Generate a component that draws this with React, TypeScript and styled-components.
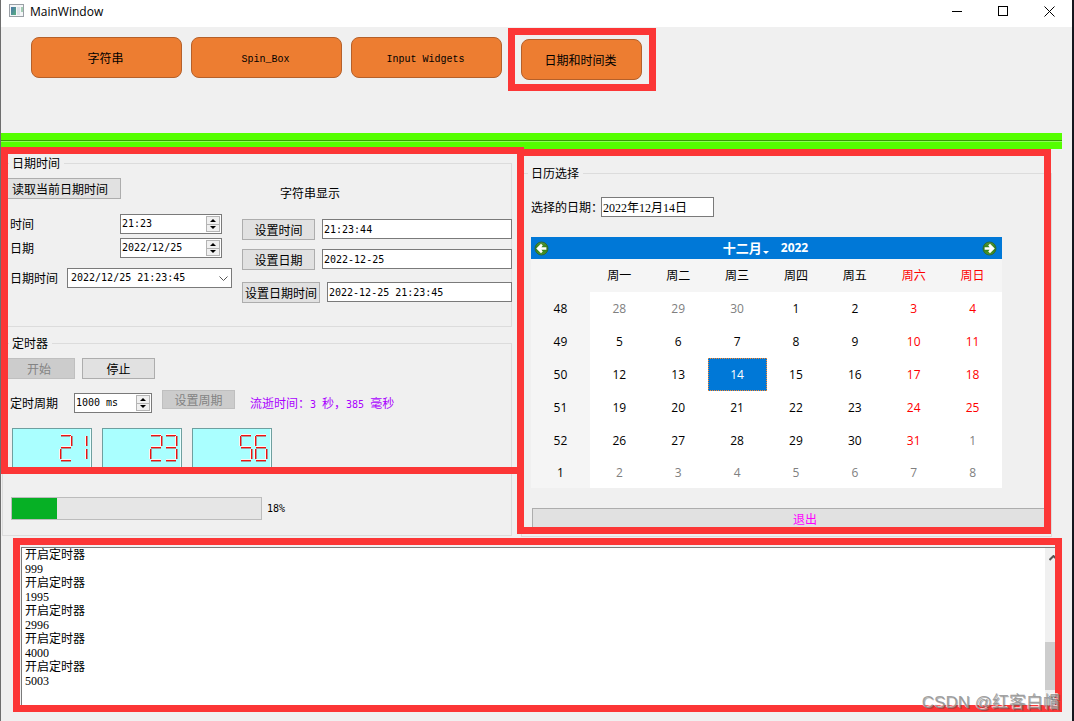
import React from "react";
import styled, { createGlobalStyle, css } from "styled-components";

const SONG = `"Liberation Serif", "Noto Sans CJK SC", serif`;
const MONO = `"DejaVu Sans Mono", "Noto Sans CJK SC", monospace`;
const TYPEWRITER = `"Liberation Mono", "Noto Sans CJK SC", monospace`;
const UI = `"Open Sans", "Noto Sans CJK SC", sans-serif`;
const MARK = "#fc3636";

const GlobalStyle = createGlobalStyle`
  * { box-sizing: border-box; }
  body {
    margin: 0;
    background: #f0f0f0;
    color: #000;
    font-family: ${SONG};
    font-size: 12px;
    line-height: 14px;
  }
  button, input, select, textarea {
    margin: 0;
    border-radius: 0;
    font: inherit;
    color: inherit;
  }
`;

const Window = styled.div`
  position: relative;
  min-height: 100vh;
  border-left: 1px solid #6e6e6e;
  border-right: 2px solid #16161e;
  background: #f0f0f0;
  overflow: hidden;
`;

/* ---------- title bar ---------- */

const TitleBar = styled.header`
  display: flex;
  align-items: flex-start;
  height: 27px;
  padding-left: 8px;
  background: #fff;
`;

const AppIcon = styled.svg`
  width: 16px;
  height: 16px;
  margin-top: 3px;
`;

const Title = styled.h1`
  flex: 1;
  margin: 0 0 0 5px;
  font: 400 12px/23px ${UI};
`;

const CaptionButton = styled.button`
  width: 46px;
  height: 23px;
  padding: 0;
  border: 0;
  background: none;
  svg { display: block; margin: 0 auto; }
`;

/* ---------- page switcher ---------- */

const PageNav = styled.nav`
  display: flex;
  align-items: flex-start;
  height: 106px;
  padding: 1px 0 0 30px;
`;

const PageButtons = styled.div`
  display: flex;
  gap: 9px;
  padding: 9px 6px 0 0;
`;

const PageButton = styled.button<{ $width?: number }>`
  width: ${(p) => p.$width ?? 151}px;
  height: 41px;
  padding: 2px 2px 0 0;
  border: 1px solid #b5602a;
  border-radius: 8px;
  background: #ed7d31;
`;

const MarkedPage = styled.div`
  padding: 4px 7px 4px 6px;
  border: 7px solid ${MARK};
`;

const Latin = styled.span`
  font-family: ${TYPEWRITER};
  font-size: 10px;
`;

const Digits = styled.span`
  font-family: ${MONO};
  font-size: 10px;
`;

const GreenRule = styled.div`
  display: flex;
  flex-direction: column;
  justify-content: center;
  height: 16px;
  margin-right: 10px;
  background: #55ff00;
  hr {
    width: 100%;
    height: 2px;
    margin: 0;
    border: 0;
    border-top: 1px solid #389c06;
    background: #8eff55;
  }
`;

/* ---------- panels ---------- */

const Panels = styled.main`
  display: grid;
  grid-template-columns: minmax(0, 510fr) minmax(0, 531fr);
  gap: 9px;
  padding: 0 20px 0 1px;
`;

const LeftPanel = styled.div`
  position: relative;
  display: flex;
  flex-direction: column;
  gap: 9px;
  padding-top: 7px;
  z-index: 1;
`;

const RightPanel = styled.div`
  position: relative;
  padding-top: 17px;
`;

const Marker = styled.div<{ $inset: string }>`
  position: absolute;
  inset: ${(p) => p.$inset};
  border: 7px solid ${MARK};
  pointer-events: none;
`;

const Group = styled.fieldset<{ $padding: string }>`
  min-width: 0;
  margin: 0;
  padding: ${(p) => p.$padding};
  border: 1px solid #dcdcdc;
`;

const Legend = styled.legend`
  height: 14px;
  margin-left: 6px;
  padding: 0 4px 0 3px;
  line-height: 16px;
`;

const PushButton = styled.button<{ $width: number; $height?: number }>`
  flex: none;
  width: ${(p) => p.$width}px;
  height: ${(p) => p.$height ?? 21}px;
  padding: 2px 0 0;
  border: 1px solid #adadad;
  background: #e1e1e1;
  white-space: nowrap;
  &:disabled {
    border-color: #bfbfbf;
    background: #cccccc;
    color: #838383;
  }
`;

const field = css`
  height: 20px;
  border: 1px solid #7a7a7a;
  background: #fff;
`;

const TextInput = styled.input<{ $width?: number; $song?: boolean }>`
  ${field}
  min-width: 0;
  padding: 0 1px;
  flex: ${(p) => (p.$width ? "none" : "1")};
  width: ${(p) => (p.$width ? `${p.$width}px` : "auto")};
  font-family: ${(p) => (p.$song ? SONG : MONO)};
  font-size: ${(p) => (p.$song ? 12 : 10)}px;
`;

const SpinFrame = styled.span<{ $width: number }>`
  ${field}
  display: flex;
  flex: none;
  width: ${(p) => p.$width}px;
  padding: 1px;
  input {
    flex: 1 1 0;
    width: 0;
    min-width: 0;
    padding: 0;
    border: 0;
    outline: 0;
    background: none;
    font-family: ${MONO};
    font-size: 10px;
  }
`;

const SpinArrows = styled.span`
  display: flex;
  flex: none;
  flex-direction: column;
  width: 14px;
  button {
    display: flex;
    flex: 1;
    align-items: center;
    justify-content: center;
    padding: 0;
    border: 1px solid #b4b4b4;
    background: #f0f0f0;
  }
  button + button { border-top: 0; }
`;

const Combo = styled.span`
  position: relative;
  flex: none;
  width: 165px;
  height: 20px;
  select {
    ${field}
    display: block;
    width: 100%;
    padding: 0 20px 0 3px;
    appearance: none;
    font-family: ${MONO};
    font-size: 10px;
  }
  svg {
    position: absolute;
    right: 4px;
    top: 8px;
    pointer-events: none;
  }
`;

/* ---------- date and time group ---------- */

const DateColumns = styled.div`
  display: flex;
  gap: 10px;
`;

const EditColumn = styled.div`
  flex: none;
  width: 229px;
  padding-top: 8px;
`;

const ReadButton = styled(PushButton)`
  display: block;
  padding: 2px 12px 0 8px;
`;

const EditRow = styled.div<{ $top: number; $right?: number }>`
  display: flex;
  align-items: center;
  justify-content: space-between;
  margin-top: ${(p) => p.$top}px;
  padding: 0 ${(p) => p.$right ?? 0}px 0 7px;
  label { padding-top: 2px; }
`;

const StringColumn = styled.div`
  flex: 1;
  min-width: 0;
  margin-right: -1px;
  padding-top: 17px;
`;

const StringCaption = styled.div`
  padding: 0 0 18px 38px;
`;

const StringRow = styled.div<{ $bottom?: number }>`
  display: flex;
  align-items: flex-start;
  gap: 7px;
  margin-bottom: ${(p) => p.$bottom ?? 0}px;
`;

/* ---------- timer group ---------- */

const TimerButtons = styled.div`
  display: flex;
  gap: 7px;
`;

const PeriodRow = styled.div`
  display: flex;
  align-items: flex-end;
  height: 23px;
  margin-top: 11px;
  padding-left: 7px;
  > label {
    width: 64px;
    line-height: 18px;
  }
  > button {
    align-self: flex-start;
    margin: 0 15px 0 10px;
  }
`;

const Elapsed = styled.output`
  color: #aa00ff;
  line-height: 16px;
  white-space: nowrap;
`;

const LcdRow = styled.div`
  display: flex;
  gap: 10px;
  margin-top: 15px;
  padding-left: 9px;
`;

const LcdBox = styled.div`
  width: 80px;
  height: 42px;
  border: 1px solid #6f9f9f;
  background: #aaffff;
  box-shadow: inset -1px 0 #e8ffff;
  svg { display: block; margin: 4px 2px 0 auto; }
`;

const ProgressRow = styled.div`
  display: flex;
  align-items: center;
  gap: 5px;
  margin-top: 27px;
  padding-left: 8px;
  progress {
    width: 251px;
    height: 23px;
    appearance: none;
    border: 1px solid #bcbcbc;
    background: #e6e6e6;
  }
  progress::-webkit-progress-bar { background: #e6e6e6; }
  progress::-webkit-progress-value { background: #06b025; }
`;

/* ---------- calendar group ---------- */

const CalendarBody = styled.div`
  padding-left: 9px;
`;

const PickedRow = styled.div`
  display: flex;
  align-items: center;
  margin-bottom: 20px;
  label {
    width: 70px;
    padding-top: 2px;
    white-space: nowrap;
  }
`;

const Calendar = styled.div`
  width: calc(100% - 49px);
  height: 251px;
  font-family: ${UI};
`;

const CalendarNav = styled.div`
  display: flex;
  align-items: center;
  justify-content: space-between;
  height: 22px;
  padding: 0 5px 0 3px;
  background: #0078d7;
  color: #fff;
`;

const NavButton = styled.button`
  display: flex;
  align-items: center;
  padding: 0;
  border: 0;
  background: none;
  font-weight: 700;
`;

const MonthYear = styled.div`
  display: flex;
  gap: 12px;
  font-size: 13px;
  button + button { font-size: 12px; }
  svg { margin: 8px 0 0 1px; }
`;

const Days = styled.table`
  width: 100%;
  height: 229px;
  table-layout: fixed;
  border-collapse: collapse;
  background: #fff;
  tr { height: 33px; }
  tbody tr:last-child { height: 31px; }
  tbody th, tbody td { padding-top: 1px; }
`;

const HeadCell = styled.th<{ $weekend?: boolean }>`
  padding: 0;
  background: #f5f5f5;
  color: ${(p) => (p.$weekend ? "#ff0000" : "#000")};
  font-weight: 400;
  text-align: center;
`;

const DayCell = styled.td<{ $tone: "plain" | "weekend" | "other" | "picked" }>`
  padding: 0;
  text-align: center;
  color: ${(p) =>
    ({ plain: "#000", weekend: "#ff0000", other: "#808080", picked: "#fff" })[p.$tone]};
  ${(p) =>
    p.$tone === "picked" &&
    css`
      background: #0078d7;
      outline: 1px dotted #ff8728;
      outline-offset: -1px;
    `}
`;

const ExitClip = styled.div`
  overflow: hidden;
  margin-top: 20px;
  padding-left: 1px;
`;

const ExitButton = styled.button`
  display: block;
  width: calc(100% + 27px);
  height: 21px;
  padding: 2px 0 0;
  border: 1px solid #adadad;
  background: #e1e1e1;
  color: #ff00ff;
`;

/* ---------- log ---------- */

const LogSection = styled.section`
  position: relative;
  margin: 1px 10px 0 12px;
  padding: 9px 0 0 8px;
`;

const LogBox = styled.div`
  display: flex;
  height: 165px;
  border: 1px solid #7a7a7a;
  border-right: 0;
  background: #fff;
  textarea {
    flex: 1;
    padding: 0 3px;
    border: 0;
    outline: 0;
    resize: none;
    overflow: hidden;
    background: none;
    line-height: 14px;
  }
`;

const ScrollTrack = styled.div`
  display: flex;
  flex-direction: column;
  align-items: center;
  width: 17px;
  padding: 7px 0 10px;
  background: #f0f0f0;
`;

const ScrollThumb = styled.div`
  width: 17px;
  height: 48px;
  margin: auto 0 5px;
  background: #cdcdcd;
`;

const Watermark = styled.div`
  position: absolute;
  right: 12px;
  bottom: 8px;
  color: rgba(150, 150, 150, 0.9);
  font: 17px/20px "Liberation Sans", "Noto Sans CJK SC", sans-serif;
  text-shadow: 1px 1px 0 rgba(70, 70, 70, 0.4), -1px -1px 0 rgba(255, 255, 255, 0.7);
  white-space: nowrap;
`;

const SEGMENTS: Record<string, [number, number, number, number]> = {
  a: [2, 2, 12, 2],
  b: [12, 3, 12, 13],
  c: [12, 16, 12, 26],
  d: [2, 27, 12, 27],
  e: [1, 16, 1, 26],
  f: [1, 3, 1, 13],
  g: [2, 14, 12, 14],
};

const LIT: Record<string, string> = {
  "1": "bc",
  "2": "abged",
  "3": "abgcd",
  "5": "afgcd",
  "6": "afgedc",
};

function Lcd({ value }: { value: string }) {
  return (
    <LcdBox role="img" aria-label={value}>
      <svg width="30" height="30" shapeRendering="crispEdges">
        {value.split("").map((digit, i) => (
          <g key={i} transform={`translate(${i * 15} 0)`}>
            {LIT[digit].split("").map((name) => {
              const [x1, y1, x2, y2] = SEGMENTS[name];
              const flat = y1 === y2;
              const bar = (shift: number, fill: string) => (
                <rect
                  x={flat ? x1 : x1 + shift}
                  y={flat ? y1 + shift : y1}
                  width={flat ? x2 - x1 : 1}
                  height={flat ? 1 : y2 - y1}
                  fill={fill}
                />
              );
              return (
                <g key={name}>
                  {bar(-1, "#fff4f0")}
                  {bar(1, "#a89a9a")}
                  {bar(0, "#f01010")}
                </g>
              );
            })}
          </g>
        ))}
      </svg>
    </LcdBox>
  );
}

function Spin({ id, value, width }: { id: string; value: string; width: number }) {
  return (
    <SpinFrame $width={width}>
      <input id={id} type="text" defaultValue={value} />
      <SpinArrows>
        <button type="button" aria-label="增加">
          <svg width="6" height="3"><path d="M0 3L3 0L6 3Z" /></svg>
        </button>
        <button type="button" aria-label="减少">
          <svg width="6" height="3"><path d="M0 0L3 3L6 0Z" /></svg>
        </button>
      </SpinArrows>
    </SpinFrame>
  );
}

function NavArrow({ forward }: { forward?: boolean }) {
  const ball = forward ? "ballNext" : "ballPrev";
  return (
    <svg width="15" height="15" viewBox="0 0 15 15">
      <defs>
        <linearGradient id={ball} x1="0" y1="0" x2="0" y2="1">
          <stop offset="0" stopColor="#5c9a3c" />
          <stop offset="0.5" stopColor="#2f7c14" />
          <stop offset="1" stopColor="#4f9a2c" />
        </linearGradient>
      </defs>
      <circle cx="7.5" cy="7.5" r="6.5" fill={`url(#${ball})`} stroke="#2d6a3a" />
      <path
        d="M2.2 7.5L7 2.8L8.8 4.6L7.4 6.2H12.4V8.8H7.4L8.8 10.4L7 12.2Z"
        fill="#fff"
        transform={forward ? "matrix(-1 0 0 1 15 0)" : undefined}
      />
    </svg>
  );
}

const WEEKDAYS = ["周一", "周二", "周三", "周四", "周五", "周六", "周日"];
const WEEKS = [
  { no: 48, days: [28, 29, 30, 1, 2, 3, 4] },
  { no: 49, days: [5, 6, 7, 8, 9, 10, 11] },
  { no: 50, days: [12, 13, 14, 15, 16, 17, 18] },
  { no: 51, days: [19, 20, 21, 22, 23, 24, 25] },
  { no: 52, days: [26, 27, 28, 29, 30, 31, 1] },
  { no: 1, days: [2, 3, 4, 5, 6, 7, 8] },
];

function dayTone(week: number, column: number, day: number) {
  if ((week === 0 && day > 20) || (week >= 4 && day < 20)) return "other";
  if (day === 14) return "picked";
  return column > 4 ? "weekend" : "plain";
}

const LOG = [999, 1995, 2996, 4000, 5003].map((ms) => `开启定时器\n${ms}`).join("\n");

export default function App() {
  return (
    <Window lang="zh-CN">
      <GlobalStyle />
      <TitleBar>
        <AppIcon viewBox="0 0 16 16">
          <defs>
            <linearGradient id="pane" x1="0" y1="0" x2="1" y2="1">
              <stop offset="0" stopColor="#4a74a8" />
              <stop offset="1" stopColor="#58b080" />
            </linearGradient>
          </defs>
          <rect x="0.5" y="1.5" width="14" height="12" fill="#f4f6f8" stroke="#9aa0a6" />
          <rect x="2" y="4" width="5" height="8" fill="url(#pane)" />
          <rect x="8" y="4" width="3" height="8" fill="#dde3e8" />
          <rect x="12" y="4" width="2" height="5" fill="#a4cdb4" />
        </AppIcon>
        <Title>MainWindow</Title>
        <CaptionButton type="button" aria-label="最小化">
          <svg width="11" height="11"><path d="M0 5.5H10" stroke="#000" /></svg>
        </CaptionButton>
        <CaptionButton type="button" aria-label="最大化">
          <svg width="11" height="11"><rect x="0.5" y="0.5" width="9" height="9" fill="none" stroke="#000" /></svg>
        </CaptionButton>
        <CaptionButton type="button" aria-label="关闭">
          <svg width="11" height="11"><path d="M0.5 0.5L10.5 10.5M10.5 0.5L0.5 10.5" stroke="#000" /></svg>
        </CaptionButton>
      </TitleBar>

      <PageNav>
        <PageButtons>
          <PageButton type="button">字符串</PageButton>
          <PageButton type="button"><Latin>Spin_Box</Latin></PageButton>
          <PageButton type="button"><Latin>Input Widgets</Latin></PageButton>
        </PageButtons>
        <MarkedPage>
          <PageButton type="button" $width={121}>日期和时间类</PageButton>
        </MarkedPage>
      </PageNav>
      <GreenRule><hr /></GreenRule>

      <Panels>
        <LeftPanel>
          <Group $padding="0 0 23px">
            <Legend>日期时间</Legend>
            <DateColumns>
              <EditColumn>
                <ReadButton type="button" $width={118}>读取当前日期时间</ReadButton>
                <EditRow $top={15} $right={10}>
                  <label htmlFor="time">时间</label>
                  <Spin id="time" value="21:23" width={102} />
                </EditRow>
                <EditRow $top={4} $right={10}>
                  <label htmlFor="date">日期</label>
                  <Spin id="date" value="2022/12/25" width={102} />
                </EditRow>
                <EditRow $top={10}>
                  <label htmlFor="datetime">日期时间</label>
                  <Combo>
                    <select id="datetime">
                      <option>2022/12/25 21:23:45</option>
                    </select>
                    <svg width="9" height="6"><path d="M0.5 0.5L4.5 4.5L8.5 0.5" fill="none" stroke="#555" /></svg>
                  </Combo>
                </EditRow>
              </EditColumn>
              <StringColumn>
                <StringCaption>字符串显示</StringCaption>
                <StringRow $bottom={9}>
                  <PushButton type="button" $width={73}>设置时间</PushButton>
                  <TextInput aria-label="时间字符串" defaultValue="21:23:44" />
                </StringRow>
                <StringRow $bottom={12}>
                  <PushButton type="button" $width={73}>设置日期</PushButton>
                  <TextInput aria-label="日期字符串" defaultValue="2022-12-25" />
                </StringRow>
                <StringRow>
                  <PushButton type="button" $width={78}>设置日期时间</PushButton>
                  <TextInput aria-label="日期时间字符串" defaultValue="2022-12-25 21:23:45" />
                </StringRow>
              </StringColumn>
            </DateColumns>
          </Group>

          <Group $padding="8px 0 15px">
            <Legend>定时器</Legend>
            <TimerButtons>
              <PushButton type="button" $width={72} disabled>开始</PushButton>
              <PushButton type="button" $width={73}>停止</PushButton>
            </TimerButtons>
            <PeriodRow>
              <label htmlFor="period">定时周期</label>
              <Spin id="period" value="1000 ms" width={78} />
              <PushButton type="button" $width={73} $height={19} disabled>设置周期</PushButton>
              <Elapsed>
                流逝时间：<Digits>3 </Digits>秒，<Digits>385 </Digits>毫秒
              </Elapsed>
            </PeriodRow>
            <LcdRow>
              <Lcd value="21" />
              <Lcd value="23" />
              <Lcd value="56" />
            </LcdRow>
            <ProgressRow>
              <progress value={18} max={100} aria-label="进度" />
              <Digits>18%</Digits>
            </ProgressRow>
          </Group>
          <Marker $inset="-2px -12px 63px -1px" />
        </LeftPanel>

        <RightPanel>
          <Group $padding="17px 0 7px">
            <Legend>日历选择</Legend>
            <CalendarBody>
              <PickedRow>
                <label htmlFor="picked">选择的日期：</label>
                <TextInput id="picked" $width={113} $song defaultValue="2022年12月14日" />
              </PickedRow>
              <Calendar>
                <CalendarNav>
                  <NavButton type="button" aria-label="上个月"><NavArrow /></NavButton>
                  <MonthYear>
                    <NavButton type="button">
                      十二月
                      <svg width="6" height="3"><path d="M0 0L3 3L6 0Z" fill="#fff" /></svg>
                    </NavButton>
                    <NavButton type="button">2022</NavButton>
                  </MonthYear>
                  <NavButton type="button" aria-label="下个月"><NavArrow forward /></NavButton>
                </CalendarNav>
                <Days>
                  <thead>
                    <tr>
                      <HeadCell />
                      {WEEKDAYS.map((name, i) => (
                        <HeadCell key={name} scope="col" $weekend={i > 4}>{name}</HeadCell>
                      ))}
                    </tr>
                  </thead>
                  <tbody>
                    {WEEKS.map((week, w) => (
                      <tr key={week.no}>
                        <HeadCell scope="row">{week.no}</HeadCell>
                        {week.days.map((day, c) => (
                          <DayCell key={day} $tone={dayTone(w, c, day)}>{day}</DayCell>
                        ))}
                      </tr>
                    ))}
                  </tbody>
                </Days>
              </Calendar>
              <ExitClip>
                <ExitButton type="button">退出</ExitButton>
              </ExitClip>
            </CalendarBody>
          </Group>
          <Marker $inset="0 1px 3px -4px" />
        </RightPanel>
      </Panels>

      <LogSection>
        <LogBox>
          <textarea aria-label="日志" readOnly defaultValue={LOG} />
          <ScrollTrack>
            <svg width="9" height="6"><path d="M0.5 5L4.5 1L8.5 5" fill="none" stroke="#555" strokeWidth="2" /></svg>
            <ScrollThumb />
            <svg width="9" height="6"><path d="M0.5 1L4.5 5L8.5 1" fill="none" stroke="#555" strokeWidth="2" /></svg>
          </ScrollTrack>
        </LogBox>
        <Marker $inset="0" />
      </LogSection>
      <Watermark>CSDN @红客白帽</Watermark>
    </Window>
  );
}
